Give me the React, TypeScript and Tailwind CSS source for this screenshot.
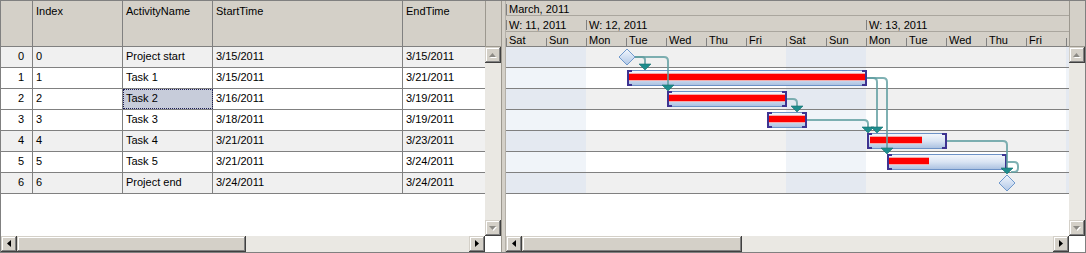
import React from 'react';

const raised =
  'shadow-[inset_-1px_-1px_0_#404040,inset_1px_1px_0_#d4d0c8,inset_-2px_-2px_0_#808080,inset_2px_2px_0_#ffffff]';

function Btn({ dir, disabled }: { dir: 'up' | 'down' | 'left' | 'right'; disabled?: boolean }) {
  let w = 7;
  let h = 4;
  let d = '';
  if (dir === 'up') d = 'M3.5 0L7 4H0Z';
  if (dir === 'down') d = 'M0 0H7L3.5 4Z';
  if (dir === 'left') {
    w = 4;
    h = 7;
    d = 'M4 0V7L0 3.5Z';
  }
  if (dir === 'right') {
    w = 4;
    h = 7;
    d = 'M0 0L4 3.5L0 7Z';
  }
  return (
    <div className={`w-[16px] h-[16px] shrink-0 bg-[#d4d0c8] flex items-center justify-center ${raised}`}>
      <svg width={w + 1} height={h + 1} viewBox={`0 0 ${w + 1} ${h + 1}`}>
        {disabled && <path d={d} fill="#ffffff" transform="translate(1 1)" />}
        <path d={d} fill={disabled ? '#8c8a85' : '#000000'} />
      </svg>
    </div>
  );
}

const rows = [
  { i: 0, name: 'Project start', s: '3/15/2011', e: '3/15/2011' },
  { i: 1, name: 'Task 1', s: '3/15/2011', e: '3/21/2011' },
  { i: 2, name: 'Task 2', s: '3/16/2011', e: '3/19/2011' },
  { i: 3, name: 'Task 3', s: '3/18/2011', e: '3/19/2011' },
  { i: 4, name: 'Task 4', s: '3/21/2011', e: '3/23/2011' },
  { i: 5, name: 'Task 5', s: '3/21/2011', e: '3/24/2011' },
  { i: 6, name: 'Project end', s: '3/24/2011', e: '3/24/2011' },
];

const days = ['Sat', 'Sun', 'Mon', 'Tue', 'Wed', 'Thu', 'Fri', 'Sat', 'Sun', 'Mon', 'Tue', 'Wed', 'Thu', 'Fri', 'Sat'];

const weeks = [
  { l: 'W: 11, 2011', w: 'w-[80px]' },
  { l: 'W: 12, 2011', w: 'w-[280px]' },
  { l: 'W: 13, 2011', w: 'w-[280px]' },
];

const bars = [
  { x: 121, row: 1, w: 240, rx: 2, rw: 236 },
  { x: 161, row: 2, w: 120, rx: 2, rw: 116 },
  { x: 261, row: 3, w: 40, rx: 2, rw: 36 },
  { x: 361, row: 4, w: 80, rx: 3, rw: 52 },
  { x: 381, row: 5, w: 120, rx: 2, rw: 40 },
];

const links = [
  'M129 10H136Q139 10 139 13V17',
  'M129 10H158Q162 10 162 14V38',
  'M281 52H287Q291 52 291 56V59',
  'M301 73H358Q362 73 362 77V80',
  'M361 31H367Q371 31 371 35V80',
  'M361 31H377Q381 31 381 35V101',
  'M441 94H497Q501 94 501 98V121',
  'M501 115H508Q512 115 512 119V121Q512 125 508 125H505',
];

const arrows = [
  { x: 139, t: 23 },
  { x: 162, t: 44 },
  { x: 291, t: 65 },
  { x: 362, t: 86 },
  { x: 371, t: 86 },
  { x: 381, t: 107 },
  { x: 501, t: 127 },
];

function GanttSvg() {
  return (
    <svg className="absolute left-0 top-0 pointer-events-none" width={563} height={189}>
      <defs>
        <linearGradient id="barg" x1="0" y1="0" x2="0" y2="1">
          <stop offset="0" stopColor="#f4f7fc" />
          <stop offset="0.5" stopColor="#d9e4f3" />
          <stop offset="1" stopColor="#a9c0e0" />
        </linearGradient>
        <linearGradient id="diag" x1="0" y1="0" x2="0" y2="1">
          <stop offset="0" stopColor="#f3f7fd" />
          <stop offset="1" stopColor="#b0c7e6" />
        </linearGradient>
      </defs>
      {rows.map((r) =>
        [0, 280, 560].map((x) => (
          <rect
            key={`${r.i}-${x}`}
            x={x}
            y={r.i * 21}
            width={80}
            height={20}
            fill={r.i % 2 === 0 ? '#e4e9f1' : '#f0f4f9'}
          />
        ))
      )}
      {bars.map((b) => {
        const y = b.row * 21 + 2;
        return (
          <g key={b.row}>
            <rect x={b.x + 0.5} y={y + 0.5} width={b.w - 1} height={15} fill="url(#barg)" stroke="#6d92c6" />
            <rect x={b.x + b.rx} y={y + 3} width={b.rw} height={8} fill="#f6a9a9" />
            <rect x={b.x + b.rx} y={y + 4} width={b.rw} height={6} fill="#ff0000" />
            <rect x={b.x} y={y} width={2} height={16} fill="#3d3391" />
            <rect x={b.x} y={y} width={5} height={2} fill="#3d3391" />
            <rect x={b.x} y={y + 14} width={5} height={2} fill="#3d3391" />
            <rect x={b.x + b.w - 2} y={y} width={2} height={16} fill="#3d3391" />
            <rect x={b.x + b.w - 5} y={y} width={5} height={2} fill="#3d3391" />
            <rect x={b.x + b.w - 5} y={y + 14} width={5} height={2} fill="#3d3391" />
          </g>
        );
      })}
      {[
        { x: 121, y: 10 },
        { x: 501, y: 136 },
      ].map((d) => (
        <polygon
          key={d.x}
          points={`${d.x},${d.y - 8} ${d.x + 8},${d.y} ${d.x},${d.y + 8} ${d.x - 8},${d.y}`}
          fill="url(#diag)"
          stroke="#7099cc"
        />
      ))}
      {links.map((p, k) => (
        <path key={k} d={p} fill="none" stroke="#5f9ea0" strokeWidth={2} strokeOpacity={0.8} />
      ))}
      {arrows.map((a, k) => (
        <polygon
          key={k}
          points={`${a.x - 6},${a.t - 6} ${a.x + 6},${a.t - 6} ${a.x},${a.t}`}
          fill="#1f8d8d"
          stroke="#116f6f"
          strokeWidth={0.6}
        />
      ))}
    </svg>
  );
}

function VScroll() {
  return (
    <div className="w-[16px] shrink-0 flex flex-col">
      <div className="h-[46px] shrink-0 bg-[#d4d0c8] border-b border-l border-[#9c988f]" />
      <Btn dir="up" disabled />
      <div className="flex-1 bg-[#eae8e3]" />
      <Btn dir="down" disabled />
      <div className="h-[16px] shrink-0 bg-white" />
    </div>
  );
}

function HScroll({ thumb }: { thumb: string }) {
  return (
    <div className="h-[16px] shrink-0 flex bg-[#eae8e3]">
      <Btn dir="left" />
      <div className={`${thumb} shrink-0 h-[16px] bg-[#d4d0c8] ${raised}`} />
      <div className="flex-1" />
      <Btn dir="right" />
    </div>
  );
}

export default function App() {
  const cellBase = 'shrink-0 border-r border-[#808080] flex items-center pb-[2px]';
  return (
    <div className="w-[1086px] h-[253px] border border-[#808080] flex bg-white text-[11px] text-black font-['Liberation_Sans',Arial,sans-serif] leading-[14px] overflow-hidden">
      {/* Left grid panel */}
      <div className="w-[484px] shrink-0 flex flex-col">
        <div className="h-[46px] shrink-0 flex bg-[#d4d0c8] border-b border-[#808080]">
          <div className="w-[32px] shrink-0 border-r border-[#808080]" />
          <div className="w-[90px] shrink-0 border-r border-[#808080] pl-[3px] pt-[3px]">Index</div>
          <div className="w-[90px] shrink-0 border-r border-[#808080] pl-[3px] pt-[3px]">ActivityName</div>
          <div className="w-[190px] shrink-0 border-r border-[#808080] pl-[3px] pt-[3px]">StartTime</div>
          <div className="flex-1 pl-[3px] pt-[3px]">EndTime</div>
        </div>
        <div className="flex-1 bg-white overflow-hidden">
          {rows.map((r) => {
            const bg = r.i === 0 || r.i === 4 || r.i === 6 ? 'bg-[#f0f0f0]' : 'bg-white';
            const sel = r.i === 2;
            return (
              <div key={r.i} className={`flex h-[21px] border-b border-[#808080] ${bg}`}>
                <div className={`w-[32px] justify-end pr-[8px] ${cellBase}`}>{r.i}</div>
                <div className={`w-[90px] pl-[3px] ${cellBase}`}>{r.i}</div>
                <div
                  className={`w-[90px] pl-[3px] ${cellBase} ${
                    sel ? 'bg-[#c7ccda] outline-1 outline-dotted outline-[#1b1b55] -outline-offset-1' : ''
                  }`}
                >
                  {r.name}
                </div>
                <div className={`w-[190px] pl-[3px] ${cellBase}`}>{r.s}</div>
                <div className="flex-1 pl-[3px] pb-[2px] flex items-center">{r.e}</div>
              </div>
            );
          })}
        </div>
        <HScroll thumb="w-[229px]" />
      </div>
      <VScroll />

      {/* Splitter */}
      <div className="w-[5px] shrink-0 bg-[#d4d0c8] border-l border-[#9c988f] border-r border-r-[#b4b0a8]" />

      {/* Gantt panel */}
      <div className="w-[563px] shrink-0 flex flex-col">
        <div className="h-[46px] shrink-0 flex flex-col bg-[#d4d0c8] border-b border-[#808080] overflow-hidden">
          <div className="h-[15px] shrink-0 flex border-b border-[#aaa69e]">
            <div className="w-px h-[11px] self-end bg-[#808080]" />
            <span className="pl-[2px] pt-px">March, 2011</span>
          </div>
          <div className="h-[16px] shrink-0 flex border-b border-[#aaa69e]">
            {weeks.map((w) => (
              <div key={w.l} className={`${w.w} shrink-0 flex`}>
                <div className="w-px h-[10px] self-end mb-px bg-[#808080]" />
                <span className="pl-[2px] pt-[2px] whitespace-nowrap">{w.l}</span>
              </div>
            ))}
          </div>
          <div className="flex-1 flex">
            {days.map((d, k) => (
              <div key={k} className="w-[40px] shrink-0 flex">
                <div className="w-px h-[9px] self-end bg-[#808080]" />
                <span className="pl-[2px] pt-px">{d}</span>
              </div>
            ))}
          </div>
        </div>
        <div className="flex-1 relative bg-white overflow-hidden">
          {rows.map((r) => (
            <div
              key={r.i}
              className={`h-[21px] border-b border-[#808080] ${r.i % 2 === 0 ? 'bg-[#f0f0f0]' : 'bg-white'}`}
            />
          ))}
          <GanttSvg />
        </div>
        <HScroll thumb="w-[220px]" />
      </div>
      <VScroll />
    </div>
  );
}
